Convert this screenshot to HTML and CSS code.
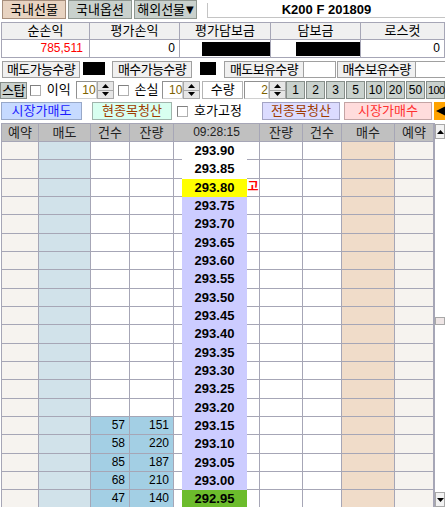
FILE: index.html
```html
<!DOCTYPE html>
<html lang="ko">
<head>
<meta charset="utf-8">
<title>K200 F 201809</title>
<link rel="stylesheet" href="styles.css">
</head>
<body>
<div class="app">
  <div class="tabs">
    <div class="tab tab-on">국내선물</div>
    <div class="tab tab-opt">국내옵션</div>
    <div class="tab tab-ovs">해외선물<span class="tri">▼</span></div>
    <div class="title">K200 F 201809</div>
  </div>

  <div class="summary">
    <div class="sh">순손익</div>
    <div class="sh">평가손익</div>
    <div class="sh">평가담보금</div>
    <div class="sh">담보금</div>
    <div class="sh">로스컷</div>
    <div class="sv red">785,511</div>
    <div class="sv">0</div>
    <div class="sv"><span class="mask mask1"></span></div>
    <div class="sv"><span class="mask mask2"></span></div>
    <div class="sv">0</div>
  </div>

  <div class="qty">
    <div class="qbtn q1">매도가능수량</div>
    <div class="blk b1"></div>
    <div class="qbtn q2">매수가능수량</div>
    <div class="blk b2"></div>
    <div class="qbtn q3">매도보유수량</div>
    <div class="wbox w1"></div>
    <div class="qbtn q4">매수보유수량</div>
    <div class="wbox w2"></div>
  </div>

  <div class="stop">
    <div class="gbtn stopbtn">스탑</div>
    <div class="chk c-a"></div>
    <div class="lbl l-a">이익</div>
    <div class="spin s-a">
      <div class="spin-in">10</div>
      <div class="spin-btns">
        <div class="sb"><svg width="7" height="4" viewBox="0 0 7 4"><polygon points="3.5,0 7,4 0,4" fill="#000"/></svg></div>
        <div class="sb"><svg width="7" height="4" viewBox="0 0 7 4"><polygon points="0,0 7,0 3.5,4" fill="#000"/></svg></div>
      </div>
    </div>
    <div class="chk c-b"></div>
    <div class="lbl l-b">손실</div>
    <div class="spin s-b">
      <div class="spin-in">10</div>
      <div class="spin-btns">
        <div class="sb"><svg width="7" height="4" viewBox="0 0 7 4"><polygon points="3.5,0 7,4 0,4" fill="#000"/></svg></div>
        <div class="sb"><svg width="7" height="4" viewBox="0 0 7 4"><polygon points="0,0 7,0 3.5,4" fill="#000"/></svg></div>
      </div>
    </div>
    <div class="qlabel">수량</div>
    <div class="spin s-c">
      <div class="spin-in wide">2</div>
      <div class="spin-btns">
        <div class="sb"><svg width="7" height="4" viewBox="0 0 7 4"><polygon points="3.5,0 7,4 0,4" fill="#000"/></svg></div>
        <div class="sb"><svg width="7" height="4" viewBox="0 0 7 4"><polygon points="0,0 7,0 3.5,4" fill="#000"/></svg></div>
      </div>
    </div>
    <div class="nums">
      <div class="gbtn nb">1</div>
      <div class="gbtn nb">2</div>
      <div class="gbtn nb">3</div>
      <div class="gbtn nb">5</div>
      <div class="gbtn nb">10</div>
      <div class="gbtn nb">20</div>
      <div class="gbtn nb">50</div>
      <div class="gbtn nb nb-last">100</div>
    </div>
  </div>

  <div class="acts">
    <div class="abtn mkt-sell">시장가매도</div>
    <div class="abtn clr-one">현종목청산</div>
    <div class="chk c-c"></div>
    <div class="lbl l-c">호가고정</div>
    <div class="abtn clr-all">전종목청산</div>
    <div class="abtn mkt-buy">시장가매수</div>
    <div class="obtn"><svg width="10" height="10" viewBox="0 0 10 10"><polygon points="0,5 10,0 10,10" fill="#000"/></svg></div>
  </div>

  <div class="board">
    <div class="table">
      <div class="row head">
        <div class="c c1">예약</div><div class="c c2">매도</div><div class="c c3">건수</div><div class="c c4">잔량</div>
        <div class="c ctime">09:28:15</div>
        <div class="c c8">잔량</div><div class="c c9">건수</div><div class="c c10">매수</div><div class="c c11">예약</div>
      </div>
      <div class="row"><div class="c c1"></div><div class="c c2"></div><div class="c c3"></div><div class="c c4"></div><div class="c c5"></div><div class="c c6">293.90</div><div class="c c7"></div><div class="c c8"></div><div class="c c9"></div><div class="c c10"></div><div class="c c11"></div></div>
      <div class="row"><div class="c c1"></div><div class="c c2"></div><div class="c c3"></div><div class="c c4"></div><div class="c c5"></div><div class="c c6">293.85</div><div class="c c7"></div><div class="c c8"></div><div class="c c9"></div><div class="c c10"></div><div class="c c11"></div></div>
      <div class="row"><div class="c c1"></div><div class="c c2"></div><div class="c c3"></div><div class="c c4"></div><div class="c c5"></div><div class="c c6 cur">293.80</div><div class="c c7 hi">고</div><div class="c c8"></div><div class="c c9"></div><div class="c c10"></div><div class="c c11"></div></div>
      <div class="row"><div class="c c1"></div><div class="c c2"></div><div class="c c3"></div><div class="c c4"></div><div class="c c5"></div><div class="c c6 pp">293.75</div><div class="c c7"></div><div class="c c8"></div><div class="c c9"></div><div class="c c10"></div><div class="c c11"></div></div>
      <div class="row"><div class="c c1"></div><div class="c c2"></div><div class="c c3"></div><div class="c c4"></div><div class="c c5"></div><div class="c c6 pp">293.70</div><div class="c c7"></div><div class="c c8"></div><div class="c c9"></div><div class="c c10"></div><div class="c c11"></div></div>
      <div class="row"><div class="c c1"></div><div class="c c2"></div><div class="c c3"></div><div class="c c4"></div><div class="c c5"></div><div class="c c6 pp">293.65</div><div class="c c7"></div><div class="c c8"></div><div class="c c9"></div><div class="c c10"></div><div class="c c11"></div></div>
      <div class="row"><div class="c c1"></div><div class="c c2"></div><div class="c c3"></div><div class="c c4"></div><div class="c c5"></div><div class="c c6 pp">293.60</div><div class="c c7"></div><div class="c c8"></div><div class="c c9"></div><div class="c c10"></div><div class="c c11"></div></div>
      <div class="row"><div class="c c1"></div><div class="c c2"></div><div class="c c3"></div><div class="c c4"></div><div class="c c5"></div><div class="c c6 pp">293.55</div><div class="c c7"></div><div class="c c8"></div><div class="c c9"></div><div class="c c10"></div><div class="c c11"></div></div>
      <div class="row"><div class="c c1"></div><div class="c c2"></div><div class="c c3"></div><div class="c c4"></div><div class="c c5"></div><div class="c c6 pp">293.50</div><div class="c c7"></div><div class="c c8"></div><div class="c c9"></div><div class="c c10"></div><div class="c c11"></div></div>
      <div class="row"><div class="c c1"></div><div class="c c2"></div><div class="c c3"></div><div class="c c4"></div><div class="c c5"></div><div class="c c6 pp">293.45</div><div class="c c7"></div><div class="c c8"></div><div class="c c9"></div><div class="c c10"></div><div class="c c11"></div></div>
      <div class="row"><div class="c c1"></div><div class="c c2"></div><div class="c c3"></div><div class="c c4"></div><div class="c c5"></div><div class="c c6 pp">293.40</div><div class="c c7"></div><div class="c c8"></div><div class="c c9"></div><div class="c c10"></div><div class="c c11"></div></div>
      <div class="row"><div class="c c1"></div><div class="c c2"></div><div class="c c3"></div><div class="c c4"></div><div class="c c5"></div><div class="c c6 pp">293.35</div><div class="c c7"></div><div class="c c8"></div><div class="c c9"></div><div class="c c10"></div><div class="c c11"></div></div>
      <div class="row"><div class="c c1"></div><div class="c c2"></div><div class="c c3"></div><div class="c c4"></div><div class="c c5"></div><div class="c c6 pp">293.30</div><div class="c c7"></div><div class="c c8"></div><div class="c c9"></div><div class="c c10"></div><div class="c c11"></div></div>
      <div class="row"><div class="c c1"></div><div class="c c2"></div><div class="c c3"></div><div class="c c4"></div><div class="c c5"></div><div class="c c6 pp">293.25</div><div class="c c7"></div><div class="c c8"></div><div class="c c9"></div><div class="c c10"></div><div class="c c11"></div></div>
      <div class="row"><div class="c c1"></div><div class="c c2"></div><div class="c c3"></div><div class="c c4"></div><div class="c c5"></div><div class="c c6 pp">293.20</div><div class="c c7"></div><div class="c c8"></div><div class="c c9"></div><div class="c c10"></div><div class="c c11"></div></div>
      <div class="row"><div class="c c1"></div><div class="c c2"></div><div class="c c3 bq">57</div><div class="c c4 bq">151</div><div class="c c5"></div><div class="c c6 pp">293.15</div><div class="c c7"></div><div class="c c8"></div><div class="c c9"></div><div class="c c10"></div><div class="c c11"></div></div>
      <div class="row"><div class="c c1"></div><div class="c c2"></div><div class="c c3 bq">58</div><div class="c c4 bq">220</div><div class="c c5"></div><div class="c c6 pp">293.10</div><div class="c c7"></div><div class="c c8"></div><div class="c c9"></div><div class="c c10"></div><div class="c c11"></div></div>
      <div class="row"><div class="c c1"></div><div class="c c2"></div><div class="c c3 bq">85</div><div class="c c4 bq">187</div><div class="c c5"></div><div class="c c6 pp">293.05</div><div class="c c7"></div><div class="c c8"></div><div class="c c9"></div><div class="c c10"></div><div class="c c11"></div></div>
      <div class="row"><div class="c c1"></div><div class="c c2"></div><div class="c c3 bq">68</div><div class="c c4 bq">210</div><div class="c c5"></div><div class="c c6 pp">293.00</div><div class="c c7"></div><div class="c c8"></div><div class="c c9"></div><div class="c c10"></div><div class="c c11"></div></div>
      <div class="row"><div class="c c1"></div><div class="c c2"></div><div class="c c3 bq">47</div><div class="c c4 bq">140</div><div class="c c5"></div><div class="c c6 gr">292.95</div><div class="c c7"></div><div class="c c8"></div><div class="c c9"></div><div class="c c10"></div><div class="c c11"></div></div>
    </div>
    <div class="scroll">
      <div class="sbtn"><svg width="7" height="4" viewBox="0 0 7 4"><polygon points="3.5,0 7,4 0,4" fill="#000"/></svg></div>
      <div class="track">
        <div class="thumb"></div>
      </div>
      <div class="sbtn"><svg width="7" height="4" viewBox="0 0 7 4"><polygon points="0,0 7,0 3.5,4" fill="#000"/></svg></div>
    </div>
  </div>
</div>
</body>
</html>
```

FILE: styles.css
```css
html, body {
  margin: 0;
  padding: 0;
  background: #ffffff;
}

.app {
  width: 445px;
  height: 507px;
  overflow: hidden;
  font-family: "Liberation Sans", "Noto Sans CJK KR", sans-serif;
  font-size: 12px;
  color: #000;
  display: flex;
  flex-direction: column;
}

/* ---------- tabs ---------- */
.tabs {
  display: flex;
  height: 20px;
  flex: none;
}
.tab {
  box-sizing: border-box;
  height: 19px;
  margin-left: 2px;
  border: 1px solid #8f9791;
  background: #c9d1cd;
  display: flex;
  align-items: center;
  justify-content: center;
  font-size: 13px;
  line-height: 17px;
  white-space: nowrap;
}
.tab-on {
  width: 64px;
  background: #e8d3c1;
  border-color: #a68e7c;
}
.tab-opt { width: 64px; }
.tab-ovs { width: 63px; }
.tri {
  font-family: "DejaVu Sans", sans-serif;
  font-size: 10px;
  margin-left: 1px;
}
.title {
  flex: 1;
  box-sizing: border-box;
  margin-left: 10px;
  margin-top: 3px;
  height: 15px;
  border-left: 1px solid #c4c4c4;
  border-bottom: 1px solid #c4c4c4;
  background: #fff;
  font-weight: bold;
  font-size: 13px;
  line-height: 13px;
  text-align: center;
}

/* ---------- summary ---------- */
.summary {
  flex: none;
  margin-top: 2px;
  margin-left: 1px;
  width: 444px;
  box-sizing: border-box;
  border-top: 1px solid #a6a6b6;
  border-left: 1px solid #a6a6b6;
  display: grid;
  grid-template-columns: 88px 90px 91px 90px 1fr;
  grid-template-rows: 17px 18px;
}
.sh, .sv {
  box-sizing: border-box;
  border-right: 1px solid #a6a6b6;
  border-bottom: 1px solid #a6a6b6;
  white-space: nowrap;
}
.sh {
  background: #f0f0f0;
  text-align: center;
  font-size: 13px;
  line-height: 16px;
}
.sv {
  background: #fff;
  display: flex;
  align-items: center;
  justify-content: flex-end;
  padding-right: 4px;
  line-height: 17px;
}
.sv.red {
  color: #ff0000;
  padding-right: 6px;
}
.mask {
  display: block;
  background: #000;
  height: 14px;
}
.mask1 { width: 68px; margin-right: -4px; }
.mask2 { width: 64px; margin-right: -4px; }

/* ---------- quantity row ---------- */
.qty {
  flex: none;
  margin-top: 2px;
  height: 18px;
  display: flex;
  align-items: flex-start;
}
.qbtn {
  box-sizing: border-box;
  margin-top: 1px;
  height: 17px;
  border: 1px solid #a0a0a0;
  background: #f0f0f0;
  text-align: center;
  font-size: 13px;
  letter-spacing: -0.6px;
  line-height: 15px;
  white-space: nowrap;
}
.q1 { margin-left: 2px; width: 78px; }
.q2 { margin-left: 7px; width: 80px; }
.q3 { margin-left: 8px; width: 80px; }
.q4 { margin-left: 1px; width: 79px; }
.blk {
  margin-top: 2px;
  height: 13px;
  background: #000;
}
.b1 { margin-left: 3px; width: 22px; }
.b2 { margin-left: 8px; width: 16px; }
.wbox {
  box-sizing: border-box;
  margin-top: 1px;
  height: 17px;
  background: #fff;
  border: 1px solid #a0a0a0;
  border-left: none;
}
.w1 { width: 32px; }
.w2 { flex: 1; border-right: none; }

/* ---------- stop row ---------- */
.stop {
  flex: none;
  margin-top: 2px;
  height: 20px;
  display: flex;
  align-items: center;
}
.gbtn {
  box-sizing: border-box;
  background: #c9d1cd;
  border: 1px solid #868e8a;
  text-align: center;
  white-space: nowrap;
}
.stopbtn {
  width: 27px;
  height: 17px;
  line-height: 15px;
  font-size: 13px;
  letter-spacing: -0.5px;
}
.chk {
  box-sizing: border-box;
  width: 11px;
  height: 11px;
  background: #fff;
  border: 1px solid #b0b0b0;
  border-top-color: #808080;
  border-left-color: #808080;
}
.c-a { margin-left: 3px; }
.c-b { margin-left: 4px; }
.lbl {
  font-size: 13px;
  line-height: 16px;
  white-space: nowrap;
}
.l-a { margin-left: 6px; width: 25px; }
.l-b { margin-left: 6px; width: 25px; }
.spin {
  display: flex;
  height: 18px;
}
.s-a { margin-left: 4px; }
.s-b { margin-left: 3px; }
.s-c { margin-left: 1px; }
.spin-in {
  box-sizing: border-box;
  width: 21px;
  height: 18px;
  background: #fff;
  border: 1px solid #d0d0d0;
  border-top-color: #909090;
  border-left-color: #909090;
  color: #7d6200;
  text-align: right;
  line-height: 16px;
  padding-right: 0;
  font-size: 12px;
}
.spin-in.wide { width: 25px; }
.spin-btns {
  display: flex;
  flex-direction: column;
  width: 17px;
  height: 18px;
}
.sb {
  box-sizing: border-box;
  flex: 1;
  background: #e6e6e6;
  border: 1px solid #a8a8a8;
  display: flex;
  align-items: center;
  justify-content: center;
}
.sb + .sb { border-top: none; }
.sb svg { display: block; }
.qlabel {
  box-sizing: border-box;
  margin-left: 2px;
  width: 41px;
  height: 18px;
  background: #fff;
  border: 1px solid #b4b4b4;
  text-align: center;
  font-size: 13px;
  line-height: 16px;
}
.nums {
  display: flex;
  gap: 1px;
}
.nb {
  width: 19px;
  height: 18px;
  line-height: 16px;
  font-size: 12px;
  flex: none;
}
.nb-last {
  font-size: 11px;
  letter-spacing: -0.6px;
  text-align: left;
  padding-left: 1px;
}

/* ---------- action row ---------- */
.acts {
  flex: none;
  margin-top: 1px;
  height: 20px;
  display: flex;
  align-items: center;
}
.abtn {
  box-sizing: border-box;
  height: 18px;
  line-height: 16px;
  text-align: center;
  white-space: nowrap;
  font-size: 13px;
  border: 1px solid #a0a0b0;
}
.mkt-sell {
  margin-left: 1px;
  width: 81px;
  background: #c6daff;
  border-color: #98a8c8;
  color: #1c1cff;
}
.clr-one {
  margin-left: 10px;
  width: 80px;
  background: #d8fff0;
  border-color: #a0b4ac;
  color: #a03c00;
}
.c-c { margin-left: 5px; }
.l-c { margin-left: 6px; width: 52px; }
.clr-all {
  margin-left: 16px;
  width: 78px;
  background: #dcdcff;
  border-color: #a4a4c4;
  color: #a03c00;
}
.mkt-buy {
  margin-left: 4px;
  width: 88px;
  background: #ffdcdc;
  border-color: #c4a4a4;
  color: #ff3030;
}
.obtn {
  margin-left: 2px;
  flex: 1;
  height: 18px;
  background: #ffa200;
  display: flex;
  align-items: center;
  justify-content: flex-end;
}
.obtn svg { display: block; margin-right: -1px; }

/* ---------- order board ---------- */
.board {
  flex: none;
  margin-top: 2px;
  display: flex;
  align-items: stretch;
  height: 384px;
}
.table {
  margin-left: 1px;
  border-left: 1px solid #a6a6b6;
  border-top: 1px solid #a6a6b6;
  width: 433px;
  flex: none;
}
.row {
  display: grid;
  grid-template-columns: 37px 52px 39px 44px 8px 65px 13px 43px 39px 53px 40px;
  height: 18.33px;
}
.row.head {
  height: 18px;
  grid-template-columns: 37px 52px 39px 44px 86px 43px 39px 53px 40px;
}
.c {
  box-sizing: border-box;
  border-right: 1px solid #a6a6b6;
  border-bottom: 1px solid #a6a6b6;
  white-space: nowrap;
  overflow: hidden;
}
.c1, .c11 { background: #f6f3ef; }
.c2 { background: #d1e2ea; }
.c3, .c4, .c8, .c9 {
  background: #fff;
  text-align: right;
  padding-right: 4px;
  line-height: 17px;
}
.c5 { border-right: none; background: #fff; }
.c6 {
  border-right: none;
  border-bottom: none;
  background: #fff;
  text-align: center;
  font-weight: bold;
  font-size: 13px;
  line-height: 18px;
}
.c7 {
  background: #fff;
}
.c10 { background: #f0dcc9; }
.c11 { border-right-width: 2px; }
.bq { background: #a3cfe4; }
.pp { background: #ccccff; }
.cur { background: #ffff00; }
.gr { background: #6cbc2c; }
.hi {
  color: #ff0000;
  font-weight: bold;
  font-size: 12px;
  text-align: center;
  line-height: 17px;
}
.row.head .c {
  background: #c0c0c0;
  color: #222;
  text-align: center;
  line-height: 17px;
  padding-right: 0;
  font-size: 13px;
}
.row.head .ctime { border-right: 1px solid #a6a6b6; font-size: 12px; }

/* ---------- scrollbar ---------- */
.scroll {
  flex: 1;
  display: flex;
  flex-direction: column;
  background: #fff;
}
.sbtn {
  box-sizing: border-box;
  height: 15px;
  flex: none;
  margin-top: 1px;
  background: #f2f2f2;
  border: 1px solid #a8a8a8;
  display: flex;
  align-items: center;
  justify-content: center;
}
.sbtn svg { display: block; }
.track {
  flex: 1;
  display: flex;
  flex-direction: column;
  padding-top: 178px;
}
.thumb {
  box-sizing: border-box;
  height: 8px;
  background: #efe6e6;
  border: 1px solid #a8a8a8;
}
```
